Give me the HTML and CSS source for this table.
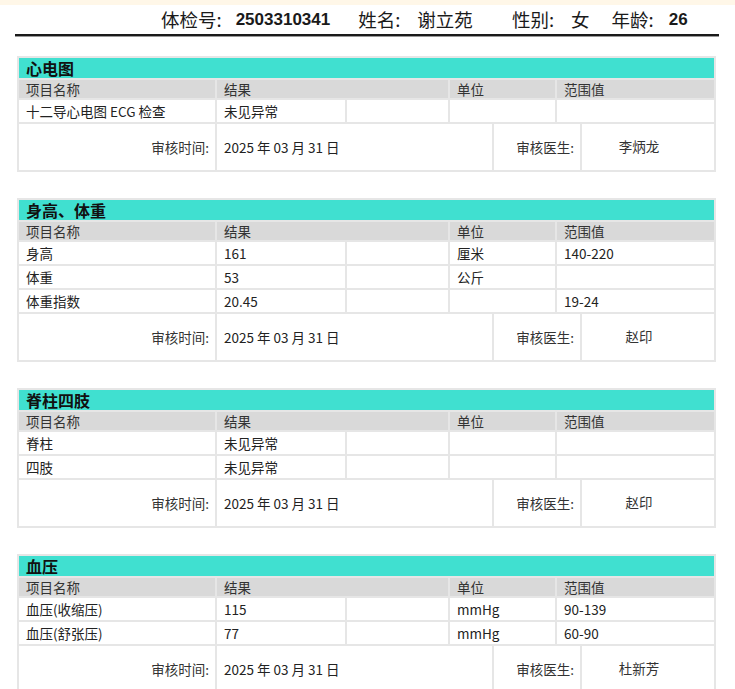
FILE: index.html
```html
<!DOCTYPE html>
<html lang="zh-CN">
<head>
<meta charset="utf-8">
<title>体检报告</title>
<link rel="stylesheet" href="styles.css">
</head>
<body>
<div class="topbar"></div>
<div class="patient">
  <span class="lbl l1">体检号:</span><span class="num">2503310341</span>
  <span class="lbl l2">姓名:</span><span class="val">谢立苑</span>
  <span class="lbl l3">性别:</span><span class="val">女</span>
  <span class="lbl l4">年龄:</span><span class="num">26</span>
</div>
<div class="rule"></div>

<section class="sec">
  <div class="title">心电图</div>
  <div class="row head"><div>项目名称</div><div class="span2">结果</div><div>单位</div><div>范围值</div></div>
  <div class="row"><div>十二导心电图 ECG 检查</div><div>未见异常</div><div></div><div></div><div></div></div>
  <div class="foot"><div class="r">审核时间:</div><div>2025 年 03 月 31 日</div><div class="r">审核医生:</div><div class="c">李炳龙</div></div>
</section>

<section class="sec">
  <div class="title">身高、体重</div>
  <div class="row head"><div>项目名称</div><div class="span2">结果</div><div>单位</div><div>范围值</div></div>
  <div class="row"><div>身高</div><div>161</div><div></div><div>厘米</div><div>140-220</div></div>
  <div class="row"><div>体重</div><div>53</div><div></div><div>公斤</div><div></div></div>
  <div class="row"><div>体重指数</div><div>20.45</div><div></div><div></div><div>19-24</div></div>
  <div class="foot"><div class="r">审核时间:</div><div>2025 年 03 月 31 日</div><div class="r">审核医生:</div><div class="c">赵印</div></div>
</section>

<section class="sec">
  <div class="title">脊柱四肢</div>
  <div class="row head"><div>项目名称</div><div class="span2">结果</div><div>单位</div><div>范围值</div></div>
  <div class="row"><div>脊柱</div><div>未见异常</div><div></div><div></div><div></div></div>
  <div class="row"><div>四肢</div><div>未见异常</div><div></div><div></div><div></div></div>
  <div class="foot"><div class="r">审核时间:</div><div>2025 年 03 月 31 日</div><div class="r">审核医生:</div><div class="c">赵印</div></div>
</section>

<section class="sec">
  <div class="title">血压</div>
  <div class="row head"><div>项目名称</div><div class="span2">结果</div><div>单位</div><div>范围值</div></div>
  <div class="row"><div>血压(收缩压)</div><div>115</div><div></div><div>mmHg</div><div>90-139</div></div>
  <div class="row"><div>血压(舒张压)</div><div>77</div><div></div><div>mmHg</div><div>60-90</div></div>
  <div class="foot"><div class="r">审核时间:</div><div>2025 年 03 月 31 日</div><div class="r">审核医生:</div><div class="c">杜新芳</div></div>
</section>
</body>
</html>
```
FILE: styles.css
```css
* { box-sizing: border-box; }
body {
  margin: 0;
  background: #fff;
  font-family: "Noto Sans CJK SC", "Noto Sans", sans-serif;
  color: #222;
}
.topbar {
  height: 5px;
  background: #fff7e8;
}
.patient {
  height: 29px;
  padding-left: 161px;
  display: flex;
  align-items: center;
  font-size: 18.5px;
  line-height: 1;
  color: #1a1a1a;
  white-space: nowrap;
}
.patient .num {
  font-weight: bold;
  font-family: "Liberation Sans", "Noto Sans", sans-serif;
  font-size: 17px;
}
.patient .l1 { margin-right: 14px; }
.patient .l2 { margin-left: 28px; margin-right: 17px; }
.patient .l3 { margin-left: 39px; margin-right: 17px; }
.patient .l4 { margin-left: 22px; margin-right: 15px; }
.rule {
  margin-left: 15px;
  width: 704px;
  height: 2px;
  background: #1a1a1a;
  box-shadow: 0 1px 0 #999;
}
.sec {
  margin: 20px 0 0 17px;
  width: 699px;
  background: #e6e6e6;
  padding: 2px;
  display: flex;
  flex-direction: column;
  gap: 2px;
  font-size: 13.5px;
}
.sec + .sec { margin-top: 26px; }
.title {
  height: 20px;
  background: #40e0d0;
  font-weight: bold;
  font-size: 16px;
  line-height: 20px;
  padding-left: 7px;
  color: #111;
}
.row {
  display: grid;
  grid-template-columns: 196px 128px 101px 105px 1fr;
  gap: 2px;
}
.row > div {
  background: #fff;
  height: 22px;
  line-height: 22px;
  padding-left: 7px;
  white-space: nowrap;
  color: #222;
}
.row.head > div {
  background: #d9d9d9;
  height: 18px;
  line-height: 18px;
  color: #333;
}
.row.head .span2 { grid-column: span 2; }
.foot {
  display: grid;
  grid-template-columns: 196px 275px 86px 1fr;
  gap: 2px;
}
.foot > div {
  background: #fff;
  height: 46px;
  line-height: 46px;
  padding-left: 7px;
  white-space: nowrap;
}
.foot > div.r { text-align: right; padding-left: 0; padding-right: 6px; color: #333; }
.foot > div.c { text-align: center; padding-left: 0; padding-right: 18px; line-height: 44px; color: #333; }
```
